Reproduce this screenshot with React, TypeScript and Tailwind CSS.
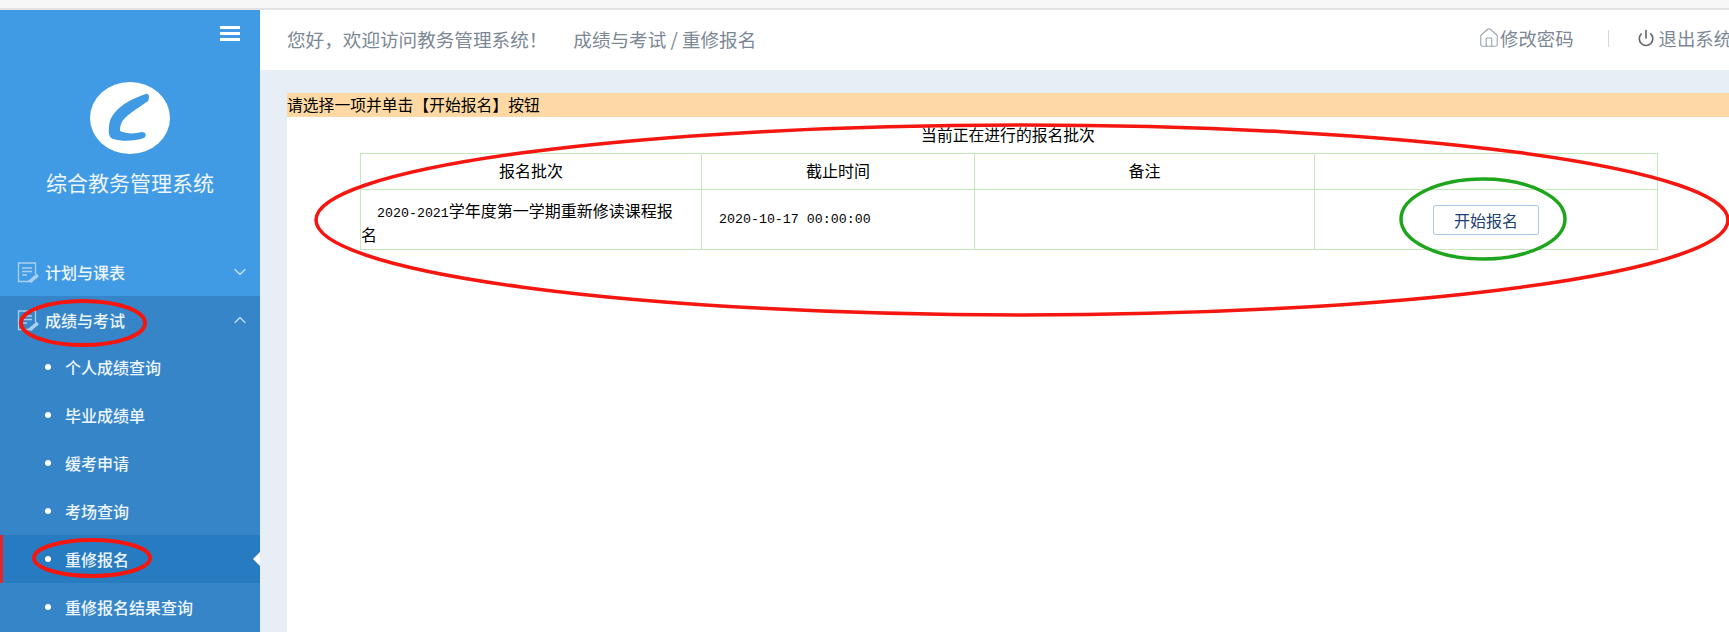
import { ChevronDown, ChevronUp, House, Power } from "lucide-react";

const subItems = ["个人成绩查询", "毕业成绩单", "缓考申请", "考场查询", "重修报名", "重修报名结果查询"];

function MenuIcon() {
  return (
    <svg viewBox="0 0 22 22" className="h-[22px] w-[22px] shrink-0" fill="none" stroke="#a9d0ef" strokeWidth="1.3">
      <path d="M15 17.5V20.5H1.5V2H18.5V13" />
      <path d="M5 7H15M5 10.5H15M5 14H10" />
      <path d="M12 20L19.5 13.5L21 15.5L14 21Z" fill="#a9d0ef" />
    </svg>
  );
}

function MenuHead({ label, open }: { label: string; open?: boolean }) {
  return (
    <div className={`flex items-center pl-[17px] pr-[10px] font-medium ${open ? "h-[47px]" : "h-[48px]"}`}>
      <MenuIcon />
      <span className="ml-[6px] flex-1 text-[16px]">{label}</span>
      {open ? (
        <ChevronUp className="h-[20px] w-[20px] text-[#c4e0f6]" strokeWidth={1.6} />
      ) : (
        <ChevronDown className="h-[20px] w-[20px] text-[#c4e0f6]" strokeWidth={1.6} />
      )}
    </div>
  );
}

function Sidebar() {
  return (
    <aside className="flex w-[260px] shrink-0 flex-col bg-[#419be4] text-[#eef6fd]">
      <div className="flex justify-end pr-[20px] pt-[16px]">
        <div className="flex w-[20px] flex-col gap-[3px]">
          <div className="h-[3px] bg-white" />
          <div className="h-[3px] bg-white" />
          <div className="h-[3px] bg-white" />
        </div>
      </div>
      <div className="mt-[41px] flex flex-col items-center">
        <svg viewBox="0 0 80 72" className="h-[72px] w-[80px]">
          <ellipse cx="40" cy="36" rx="40" ry="36" fill="#fff" />
          <path
            d="M56 12C40 17 19 28 19 46C18 52 20 56 23 57C33 60 45 59 54 56C57 54 56 50 52 50C44 52 37 52 30 49C30 44 31 40 35 36C41 30 50 25 58 19C60 16 59 11 56 12Z"
            fill="#419be4"
          />
        </svg>
        <div className="mt-[13px] text-[21px] leading-[30px]">综合教务管理系统</div>
      </div>
      <div className="mt-[51px]">
        <MenuHead label="计划与课表" />
      </div>
      <div className="flex-1 bg-[#3585c8]">
        <MenuHead label="成绩与考试" open />
        {subItems.map((item) => {
          const active = item === "重修报名";
          return (
            <div
              key={item}
              className={`relative flex h-[48px] items-center text-[16px] font-medium ${
                active ? "border-l-[3px] border-[#e0262e] bg-[#277bc0] pl-[42px]" : "pl-[45px]"
              }`}
            >
              <span className="h-[6px] w-[6px] rounded-full bg-white" />
              <span className="ml-[14px]">{item}</span>
              {active && (
                <span className="absolute right-0 top-[17px] h-0 w-0 border-y-[7px] border-r-[7px] border-y-transparent border-r-white" />
              )}
            </div>
          );
        })}
      </div>
    </aside>
  );
}

function Header() {
  return (
    <header className="flex h-[60px] shrink-0 items-center whitespace-nowrap bg-white pb-[3px] pl-[27px] text-[18.6px] text-[#7b8794]">
      <span>您好，欢迎访问教务管理系统！</span>
      <span className="ml-[26px] text-[18.6px]">成绩与考试 / 重修报名</span>
      <div className="ml-auto flex w-[251px] shrink-0 items-center overflow-hidden text-[18.4px]">
        <House className="h-[22px] w-[22px] shrink-0 text-[#9aa3ab]" strokeWidth={1.2} />
        <span className="shrink-0">修改密码</span>
        <div className="ml-[34px] h-[17px] w-px shrink-0 bg-[#d5d8db]" />
        <Power className="ml-[28px] h-[18px] w-[18px] shrink-0 text-[#666]" strokeWidth={2.2} />
        <span className="ml-[4px] shrink-0">退出系统</span>
      </div>
    </header>
  );
}

function Table() {
  const cell = "border border-[#c4e8b8]";
  return (
    <table className="ml-[73px] w-[1298px] table-fixed border-collapse text-[16px] text-black">
      <thead>
        <tr className="h-[36px]">
          <th className={`${cell} w-[341px] pb-[3px] font-normal`}>报名批次</th>
          <th className={`${cell} w-[273px] pb-[3px] font-normal`}>截止时间</th>
          <th className={`${cell} w-[340px] pb-[3px] font-normal`}>备注</th>
          <th className={`${cell} font-normal`} />
        </tr>
      </thead>
      <tbody>
        <tr className="h-[60px]">
          <td className={`${cell} pr-[16px] pt-[4px] indent-[16px] leading-[20px]`}>
            <span className="font-['Liberation_Mono',monospace] text-[13.3px]">2020-2021</span>学年度第一学期重新修读课程报名
          </td>
          <td className={`${cell} pl-[17px] font-['Liberation_Mono',monospace] text-[13.3px]`}>2020-10-17 00:00:00</td>
          <td className={cell} />
          <td className={`${cell} text-center`}>
            <button className="h-[30px] w-[106px] rounded-[2px] border border-[#a9cbe9] bg-white text-[16px] text-[#1d3f72]">
              开始报名
            </button>
          </td>
        </tr>
      </tbody>
    </table>
  );
}

export default function App() {
  return (
    <div className="relative flex h-screen flex-col overflow-hidden bg-white font-['Noto_Sans_CJK_SC','Liberation_Sans',sans-serif]">
      <div className="h-[10px] shrink-0 border-b-2 border-[#e3e3e3] bg-[#f7f7f7]" />
      <div className="flex min-h-0 flex-1">
        <Sidebar />
        <main className="flex min-w-0 flex-1 flex-col bg-[#e8eef6]">
          <Header />
          <div className="ml-[27px] mt-[23px] flex-1 bg-white">
            <div className="flex h-[24px] items-center bg-[#fed9a6] text-[15.8px] text-black">
              请选择一项并单击【开始报名】按钮
            </div>
            <div className="flex h-[36px] items-center justify-center text-[15.8px] text-black">当前正在进行的报名批次</div>
            <Table />
          </div>
        </main>
      </div>
      {/* hand-drawn marks sitting on top of the screenshot */}
      <svg className="pointer-events-none absolute left-0 top-0 h-[632px] w-[1729px]" viewBox="0 0 1729 632" fill="none">
        <ellipse cx="1022" cy="220" rx="706" ry="95" stroke="#f5160f" strokeWidth="3.5" />
        <g stroke="#f5160f" strokeWidth="4">
          <ellipse cx="83" cy="323" rx="62" ry="22" />
          <ellipse cx="92" cy="558" rx="58" ry="18" />
        </g>
        <ellipse cx="1483" cy="219" rx="82" ry="40" stroke="#1ea51e" strokeWidth="3.5" />
      </svg>
    </div>
  );
}
